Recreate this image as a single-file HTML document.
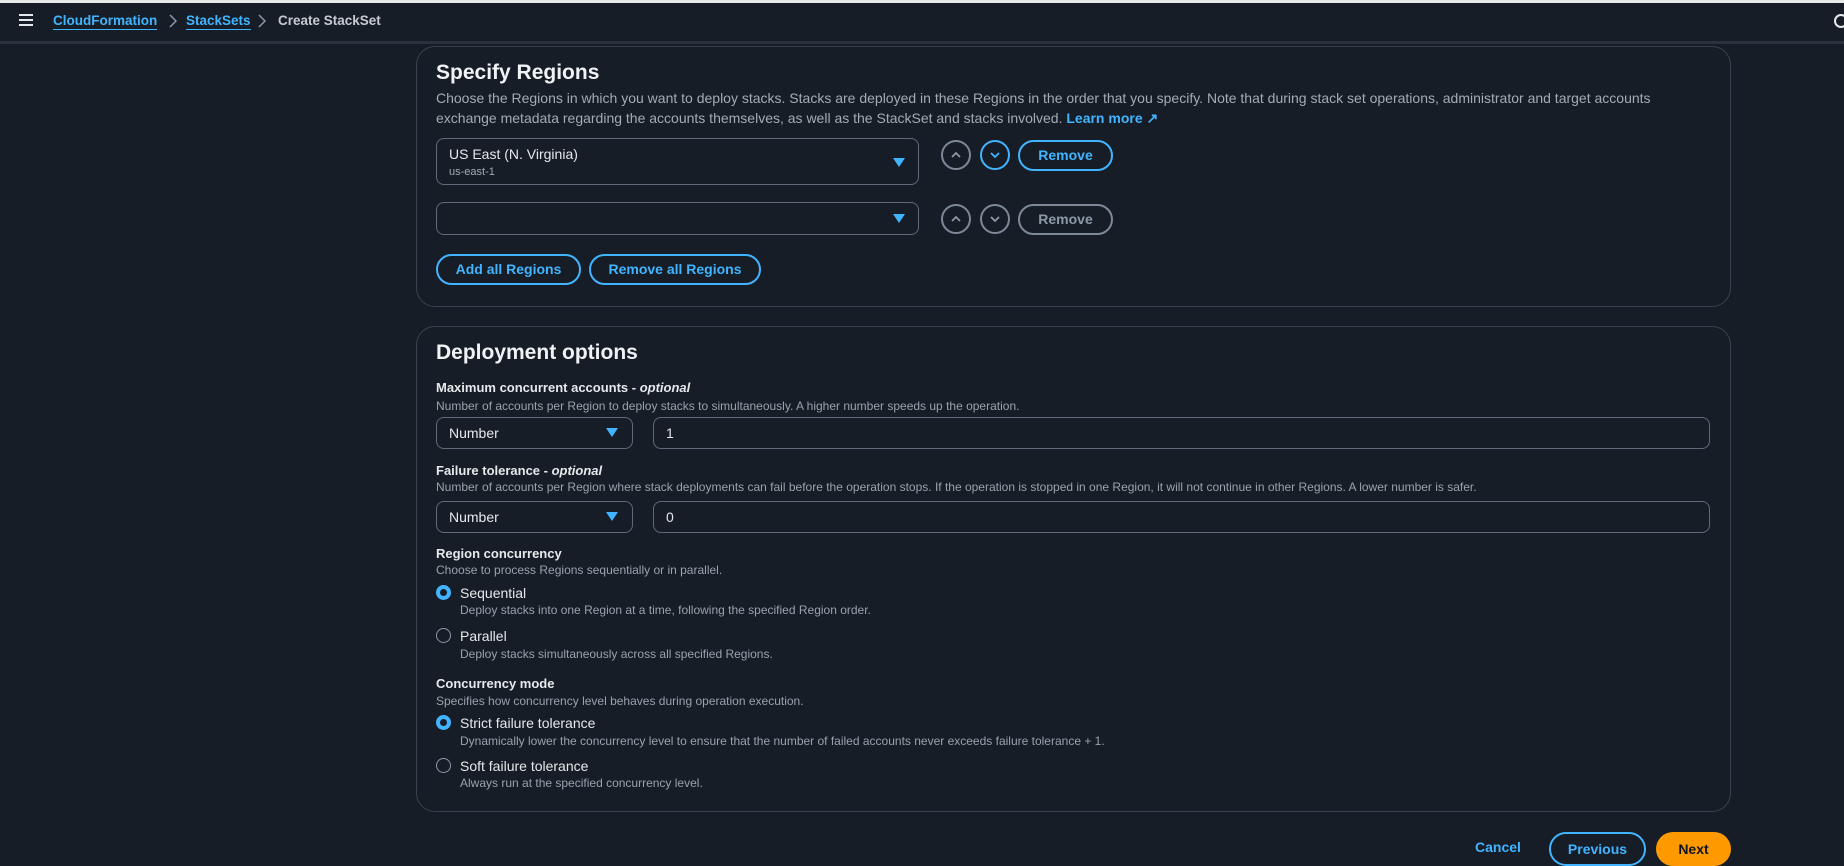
<!DOCTYPE html>
<html><head><meta charset="utf-8"><style>
*{box-sizing:border-box;margin:0;padding:0}
body{width:1844px;height:856px;overflow:hidden;background:#161d26;font-family:"Liberation Sans",sans-serif;color:#d1d5db;position:relative}
.a{position:absolute;white-space:nowrap}
.top{position:absolute;left:0;top:0;width:1844px;height:44px;background:#161d26;border-top:3px solid #e8e8e8;border-bottom:3px solid #2a323d}
.card{position:absolute;border:1.5px solid #39424e;border-radius:19px;background:#161d26}
.h{font-size:21px;font-weight:bold;color:#f0f2f4}
.d{font-size:14px;color:#a4abb5}
.sd{font-size:12px;color:#99a2ad}
.lb{font-size:13px;font-weight:bold;color:#e6e9ec}
.sel{position:absolute;border:1.5px solid #5f6b7a;border-radius:8px;background:#161d26}
.tri{position:absolute;width:0;height:0;border-left:6px solid transparent;border-right:6px solid transparent;border-top:9px solid #42b4ff}
.circ{position:absolute;width:30px;height:30px;border-radius:50%;border:2px solid #7d8998}
.circ svg{position:absolute;left:7px;top:7px}
.pill{position:absolute;border:2px solid #42b4ff;border-radius:18px;color:#42b4ff;font-weight:bold;font-size:14px;text-align:center}
.radio{position:absolute;width:15px;height:15px;border-radius:50%;border:1.5px solid #8d99a8}
.radio.on{border:4px solid #42b4ff;background:#161d26}
.blue{color:#42b4ff}
.bc{font-size:13.5px;font-weight:bold;top:12px;line-height:17px}
</style></head><body>
<div class="top"></div>
<div class="a" style="left:19px;top:14px;width:14px;height:2px;background:#e6e9ec;box-shadow:0 5px 0 #e6e9ec,0 10px 0 #e6e9ec"></div>
<div class="a bc" style="left:53px;color:#42b4ff;border-bottom:1.5px solid #42b4ff">CloudFormation</div>
<svg class="a" style="left:169px;top:14px" width="8" height="14"><path d="M1 1l6 6-6 6" stroke="#8d99a8" stroke-width="1.5" fill="none"/></svg>
<div class="a bc" style="left:186px;color:#42b4ff;border-bottom:1.5px solid #42b4ff">StackSets</div>
<svg class="a" style="left:258px;top:14px" width="8" height="14"><path d="M1 1l6 6-6 6" stroke="#8d99a8" stroke-width="1.5" fill="none"/></svg>
<div class="a bc" style="left:278px;color:#c6cbd1">Create StackSet</div>
<div class="a" style="left:1834px;top:14px;width:14px;height:14px;border-radius:50%;border:2.5px solid #e6e9ec"></div>

<div class="card" style="left:416px;top:46px;width:1315px;height:261px"></div>
<div class="a h" style="left:436px;top:61px">Specify Regions</div>
<div class="a d" style="left:436px;top:90px">Choose the Regions in which you want to deploy stacks. Stacks are deployed in these Regions in the order that you specify. Note that during stack set operations, administrator and target accounts</div>
<div class="a d" style="left:436px;top:110px">exchange metadata regarding the accounts themselves, as well as the StackSet and stacks involved. <span class="blue" style="font-weight:bold">Learn more &#x2197;</span></div>
<div class="sel" style="left:436px;top:138px;width:483px;height:47px"></div>
<div class="a" style="left:449px;top:146px;font-size:14px;color:#e6e9ec">US East (N. Virginia)</div>
<div class="a" style="left:449px;top:166px;font-size:11px;color:#a4abb5">us-east-1</div>
<div class="tri" style="left:893px;top:158px"></div>
<div class="circ" style="left:941px;top:140px"><svg width="12" height="12"><path d="M2 8l4-4 4 4" stroke="#8d99a8" stroke-width="1.8" fill="none"/></svg></div>
<div class="circ" style="left:980px;top:140px;border-color:#42b4ff"><svg width="12" height="12"><path d="M2 4l4 4 4-4" stroke="#42b4ff" stroke-width="1.8" fill="none"/></svg></div>
<div class="pill" style="left:1018px;top:140px;width:95px;height:31px;line-height:27px">Remove</div>
<div class="sel" style="left:436px;top:202px;width:483px;height:33px"></div>
<div class="tri" style="left:893px;top:214px"></div>
<div class="circ" style="left:941px;top:204px"><svg width="12" height="12"><path d="M2 8l4-4 4 4" stroke="#8d99a8" stroke-width="1.8" fill="none"/></svg></div>
<div class="circ" style="left:980px;top:204px"><svg width="12" height="12"><path d="M2 4l4 4 4-4" stroke="#8d99a8" stroke-width="1.8" fill="none"/></svg></div>
<div class="pill" style="left:1018px;top:204px;width:95px;height:31px;line-height:27px;border-color:#7d8998;color:#8d99a8">Remove</div>
<div class="pill" style="left:436px;top:254px;width:145px;height:31px;line-height:27px">Add all Regions</div>
<div class="pill" style="left:589px;top:254px;width:172px;height:31px;line-height:27px">Remove all Regions</div>

<div class="card" style="left:416px;top:326px;width:1315px;height:486px"></div>
<div class="a h" style="left:436px;top:341px">Deployment options</div>
<div class="a lb" style="left:436px;top:380px">Maximum concurrent accounts - <i>optional</i></div>
<div class="a sd" style="left:436px;top:399px">Number of accounts per Region to deploy stacks to simultaneously. A higher number speeds up the operation.</div>
<div class="sel" style="left:436px;top:417px;width:197px;height:32px"></div>
<div class="a" style="left:449px;top:425px;font-size:14px;color:#e6e9ec">Number</div>
<div class="tri" style="left:606px;top:428px"></div>
<div class="sel" style="left:653px;top:417px;width:1057px;height:32px"></div>
<div class="a" style="left:666px;top:425px;font-size:14px;color:#e6e9ec">1</div>
<div class="a lb" style="left:436px;top:463px">Failure tolerance - <i>optional</i></div>
<div class="a sd" style="left:436px;top:480px">Number of accounts per Region where stack deployments can fail before the operation stops. If the operation is stopped in one Region, it will not continue in other Regions. A lower number is safer.</div>
<div class="sel" style="left:436px;top:501px;width:197px;height:32px"></div>
<div class="a" style="left:449px;top:509px;font-size:14px;color:#e6e9ec">Number</div>
<div class="tri" style="left:606px;top:512px"></div>
<div class="sel" style="left:653px;top:501px;width:1057px;height:32px"></div>
<div class="a" style="left:666px;top:509px;font-size:14px;color:#e6e9ec">0</div>
<div class="a lb" style="left:436px;top:546px">Region concurrency</div>
<div class="a sd" style="left:436px;top:563px">Choose to process Regions sequentially or in parallel.</div>
<div class="radio on" style="left:436px;top:585px"></div>
<div class="a" style="left:460px;top:585px;font-size:14px;color:#e6e9ec">Sequential</div>
<div class="a sd" style="left:460px;top:603px">Deploy stacks into one Region at a time, following the specified Region order.</div>
<div class="radio" style="left:436px;top:628px"></div>
<div class="a" style="left:460px;top:628px;font-size:14px;color:#e6e9ec">Parallel</div>
<div class="a sd" style="left:460px;top:647px">Deploy stacks simultaneously across all specified Regions.</div>
<div class="a lb" style="left:436px;top:676px">Concurrency mode</div>
<div class="a sd" style="left:436px;top:694px">Specifies how concurrency level behaves during operation execution.</div>
<div class="radio on" style="left:436px;top:715px"></div>
<div class="a" style="left:460px;top:715px;font-size:14px;color:#e6e9ec">Strict failure tolerance</div>
<div class="a sd" style="left:460px;top:734px">Dynamically lower the concurrency level to ensure that the number of failed accounts never exceeds failure tolerance + 1.</div>
<div class="radio" style="left:436px;top:758px"></div>
<div class="a" style="left:460px;top:758px;font-size:14px;color:#e6e9ec">Soft failure tolerance</div>
<div class="a sd" style="left:460px;top:776px">Always run at the specified concurrency level.</div>

<div class="a" style="left:1475px;top:839px;font-size:14px;font-weight:bold;color:#42b4ff">Cancel</div>
<div class="pill" style="left:1549px;top:832px;width:97px;height:34px;line-height:30px">Previous</div>
<div class="a" style="left:1656px;top:832px;width:75px;height:34px;border-radius:18px;background:#ff9900;color:#0f141a;font-weight:bold;font-size:14px;text-align:center;line-height:34px">Next</div>
</body></html>
